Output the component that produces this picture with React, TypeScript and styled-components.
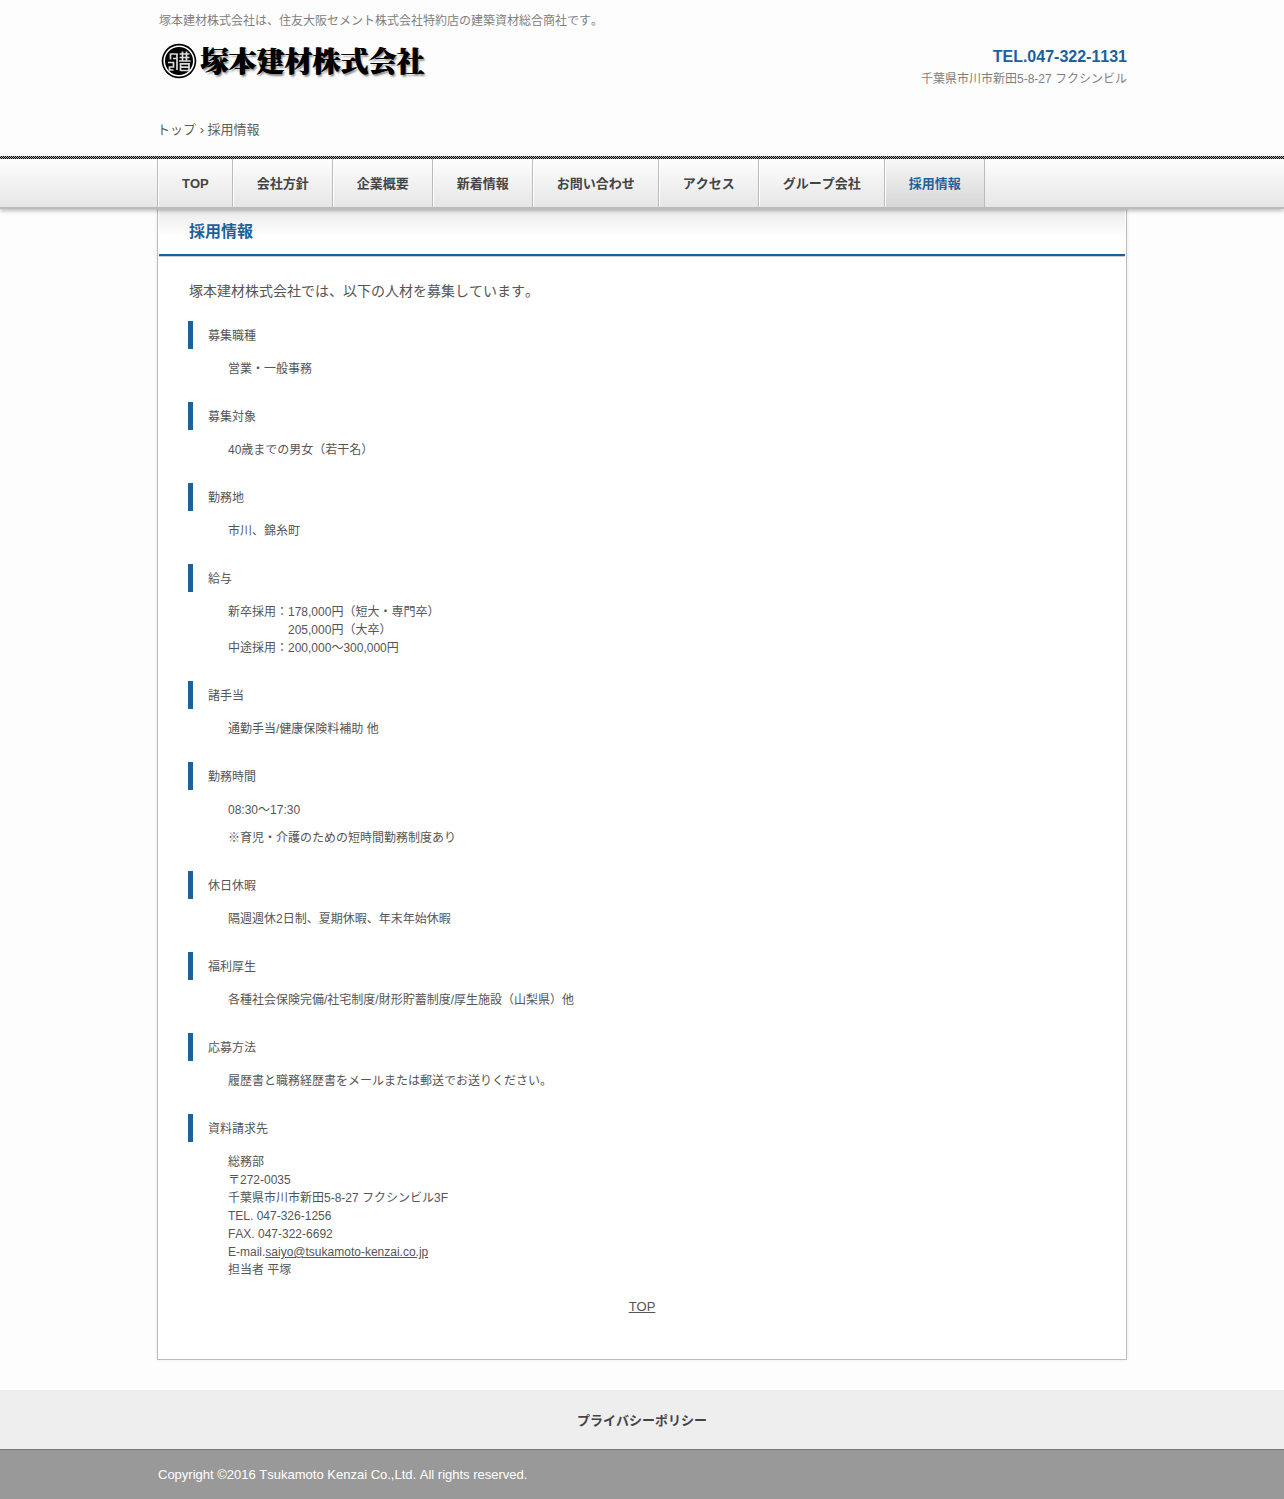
import React from "react";
import styled, { createGlobalStyle, css } from "styled-components";

const BLUE = "#1e6199";

const GlobalStyle = createGlobalStyle`
  *, *::before, *::after { box-sizing: border-box; }
  body {
    margin: 0;
    background: #fdfdfd;
    color: #555;
    font-family: Arial, "Liberation Sans", "Noto Sans CJK JP", sans-serif;
    font-size: 12px;
    font-kerning: none;
    line-height: 18px;
  }
  h1, h2, p, ul, ol, dl, dd { margin: 0; padding: 0; }
  ul, ol { list-style: none; }
`;

const Container = styled.div`
  width: 100%;
  max-width: 970px;
  margin: 0 auto;
`;

const Header = styled.header`
  padding: 12px 0 16px;
`;

const Tagline = styled.h1`
  padding-left: 2px;
  color: #808080;
  font-size: 12px;
  font-weight: 400;
  line-height: 18px;
`;

const Masthead = styled.div`
  display: flex;
  justify-content: space-between;
  align-items: flex-start;
  padding: 13px 0 30px;
`;

const Logo = styled.a`
  display: flex;
  align-items: center;
  gap: 3px;
  padding-left: 4px;
  color: #000;
  text-decoration: none;
`;

const LogoName = styled.span`
  padding-bottom: 2px;
  font-family: "Noto Serif CJK JP", "Noto Sans CJK JP", serif;
  font-size: 28px;
  font-weight: 900;
  line-height: 34px;
  text-shadow: 1px 0 #000, 2px 2px 2px #888;
`;

const Contact = styled.address`
  padding-top: 3px;
  font-style: normal;
  text-align: right;
`;

const Phone = styled.p`
  color: ${BLUE};
  font-size: 16px;
  font-weight: 700;
  line-height: 22px;
`;

const Address = styled.p`
  color: #808080;
  line-height: 22px;
`;

const Crumbs = styled.nav`
  color: #606060;
  font-size: 13px;
  line-height: 20px;
  a { color: inherit; text-decoration: none; }
`;

const NavBar = styled.nav`
  position: relative;
  z-index: 1;
  border-bottom: 2px solid #bbb;
  background: linear-gradient(#fff, #e6e6e6);
  box-shadow: 0 2px 4px rgba(0, 0, 0, 0.25);
  &::before {
    content: "";
    display: block;
    height: 3px;
    background: repeating-conic-gradient(#000 0 25%, #aaa 0 50%) 0 0 / 2px 2px;
  }
`;

const NavList = styled.ul`
  display: flex;
  flex-wrap: wrap;
`;

const NavItem = styled.li`
  border-left: 1px solid #bbb;
  &:last-child { border-right: 1px solid #bbb; }
`;

const NavLink = styled.a<{ $current?: boolean }>`
  display: block;
  height: 48px;
  padding: 0 23px;
  border-left: 1px solid #fff;
  color: #444;
  font-size: 13px;
  font-weight: 700;
  line-height: 50px;
  text-decoration: none;
  ${(p) =>
    p.$current &&
    css`
      color: ${BLUE};
      background: linear-gradient(#f8f8f8, #d6d6d6);
    `}
`;

const Panel = styled.main`
  padding: 0 1px;
  border: 1px solid #bbb;
  border-top: 0;
  background: #fff;
  box-shadow: 0 0 4px rgba(0, 0, 0, 0.08);
`;

const PageTitle = styled.h2`
  padding: 10px 30px;
  border-bottom: 2px solid ${BLUE};
  background: linear-gradient(#eaeaea, #fff 28px);
  box-shadow: 0 1px #ccc;
  color: ${BLUE};
  font-size: 16px;
  line-height: 25px;
`;

const Content = styled.div`
  padding: 25px 29px 43px;
`;

const Lead = styled.p`
  padding-left: 1px;
  font-size: 14px;
  line-height: 20px;
`;

const Details = styled.dl`
  && { margin: 20px 0 19px; }
`;

const Term = styled.dt`
  height: 28px;
  padding-left: 15px;
  border-left: 5px solid ${BLUE};
  line-height: 30px;
`;

const Description = styled.dd`
  && {
    display: grid;
    gap: 10px;
    padding: 11px 0 24px 40px;
  }
  &&:last-child { padding-bottom: 0; }
  a { color: inherit; }
`;

const Line = styled.span`
  display: block;
`;

const BackToTop = styled.p`
  font-size: 13px;
  line-height: 18px;
  text-align: center;
  a { color: inherit; }
`;

const PolicyBar = styled.div`
  height: 59px;
  margin-top: 30px;
  background: #eee;
  text-align: center;
  a {
    color: #444;
    font-size: 13px;
    font-weight: 700;
    line-height: 61px;
    text-decoration: none;
  }
`;

const Copyright = styled.footer`
  border-top: 1px solid #777;
  background: #999;
  color: #fff;
  font-size: 13px;
  line-height: 49px;
  p { padding-left: 1px; }
`;

const navItems = [
  "TOP",
  "会社方針",
  "企業概要",
  "新着情報",
  "お問い合わせ",
  "アクセス",
  "グループ会社",
  "採用情報",
];

/* Each entry holds paragraphs, and each paragraph holds its lines. */
const details: { term: string; body: React.ReactNode[][] }[] = [
  { term: "募集職種", body: [["営業・一般事務"]] },
  { term: "募集対象", body: [["40歳までの男女（若干名）"]] },
  { term: "勤務地", body: [["市川、錦糸町"]] },
  {
    term: "給与",
    body: [
      [
        "新卒採用：178,000円（短大・専門卒）",
        "\u3000\u3000\u3000\u3000\u3000205,000円（大卒）",
        "中途採用：200,000～300,000円",
      ],
    ],
  },
  { term: "諸手当", body: [["通勤手当/健康保険料補助 他"]] },
  { term: "勤務時間", body: [["08:30～17:30"], ["※育児・介護のための短時間勤務制度あり"]] },
  { term: "休日休暇", body: [["隔週週休2日制、夏期休暇、年末年始休暇"]] },
  { term: "福利厚生", body: [["各種社会保険完備/社宅制度/財形貯蓄制度/厚生施設（山梨県）他"]] },
  { term: "応募方法", body: [["履歴書と職務経歴書をメールまたは郵送でお送りください。"]] },
  {
    term: "資料請求先",
    body: [
      [
        "総務部",
        "〒272-0035",
        "千葉県市川市新田5-8-27 フクシンビル3F",
        "TEL. 047-326-1256",
        "FAX. 047-322-6692",
        <>
          E-mail.<a href="mailto:saiyo@tsukamoto-kenzai.co.jp">saiyo@tsukamoto-kenzai.co.jp</a>
        </>,
        "担当者 平塚",
      ],
    ],
  },
];

const Emblem = () => (
  <svg width="36" height="36" viewBox="0 0 36 36" aria-hidden="true">
    <circle cx="18" cy="18" r="17.3" fill="#000" />
    <circle cx="18" cy="18" r="14.8" fill="none" stroke="#fff" strokeWidth="1.6" />
    <g fill="none" stroke="#ddd" strokeWidth="1.7">
      <path d="M9.500 10.500v6M9.500 11h6.500v16M16 15.500h-4M7 19.500h5.500v4.500H8.500v3h4" />
      <path d="M18.500 11h10M18.500 14.500h10M18 18h11.500M21.500 8.500V18M25.500 8.500V18M19.500 28v-7.200h8.500V28M19.500 24.200h8.500M19.500 27.500h8.500" />
    </g>
  </svg>
);

export default function App() {
  return (
    <>
      <GlobalStyle />
      <Container>
        <Header id="top">
          <Tagline>塚本建材株式会社は、住友大阪セメント株式会社特約店の建築資材総合商社です。</Tagline>
          <Masthead>
            <Logo href="#top">
              <Emblem />
              <LogoName>塚本建材株式会社</LogoName>
            </Logo>
            <Contact>
              <Phone>TEL.047-322-1131</Phone>
              <Address>千葉県市川市新田5-8-27 フクシンビル</Address>
            </Contact>
          </Masthead>
          <Crumbs aria-label="パンくず">
            <a href="#top">トップ</a> › 採用情報
          </Crumbs>
        </Header>
      </Container>
      <NavBar>
        <Container>
          <NavList>
            {navItems.map((label) => (
              <NavItem key={label}>
                <NavLink href="#top" $current={label === "採用情報"}>
                  {label}
                </NavLink>
              </NavItem>
            ))}
          </NavList>
        </Container>
      </NavBar>
      <Container>
        <Panel>
          <PageTitle>採用情報</PageTitle>
          <Content>
            <Lead>塚本建材株式会社では、以下の人材を募集しています。</Lead>
            <Details>
              {details.map(({ term, body }) => (
                <React.Fragment key={term}>
                  <Term>{term}</Term>
                  <Description>
                    {body.map((lines, i) => (
                      <p key={i}>
                        {lines.map((line, j) => (
                          <Line key={j}>{line}</Line>
                        ))}
                      </p>
                    ))}
                  </Description>
                </React.Fragment>
              ))}
            </Details>
            <BackToTop>
              <a href="#top">TOP</a>
            </BackToTop>
          </Content>
        </Panel>
      </Container>
      <PolicyBar>
        <a href="#privacy">プライバシーポリシー</a>
      </PolicyBar>
      <Copyright>
        <Container>
          <p>Copyright ©2016 Tsukamoto Kenzai Co.,Ltd. All rights reserved.</p>
        </Container>
      </Copyright>
    </>
  );
}
